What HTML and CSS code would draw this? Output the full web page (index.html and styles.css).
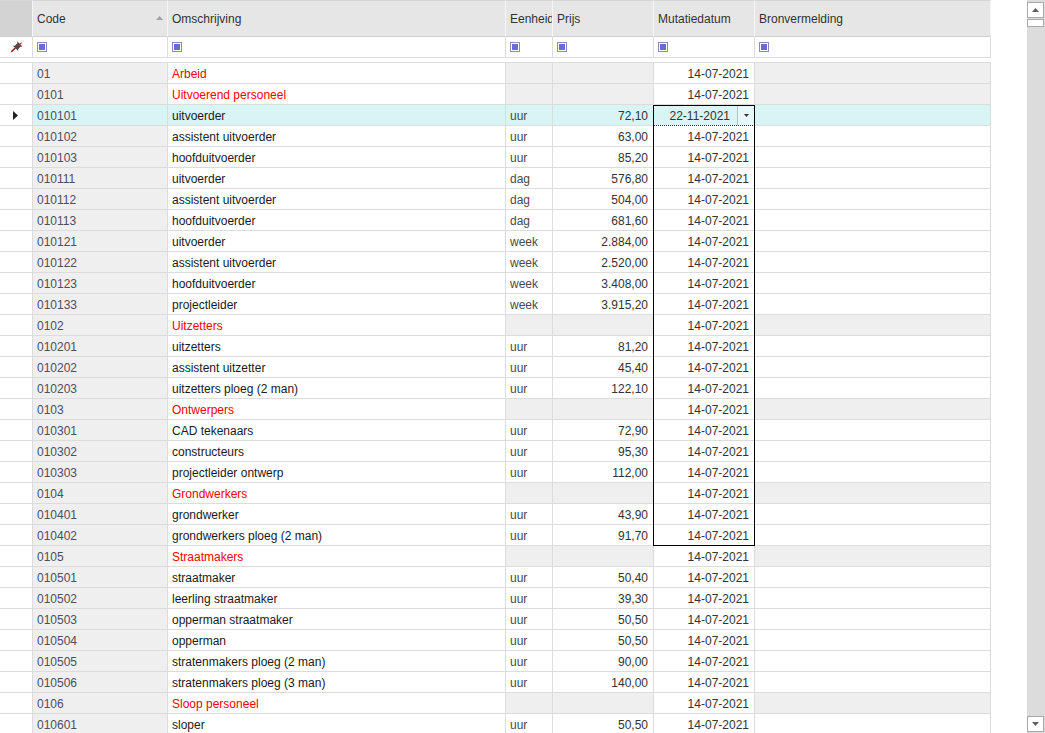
FILE: index.html
```html
<!DOCTYPE html>
<html>
<head>
<meta charset="utf-8">
<link rel="stylesheet" href="styles.css">
</head>
<body>
<div class="grid">
  <div class="row head">
    <div class="cell c-ind hind"></div>
    <div class="cell c-code hcell"><span>Code</span><svg class="sort" width="7" height="4" viewBox="0 0 7 4"><path d="M0 4 L3.5 0 L7 4 Z" fill="#a0a0a0"/></svg></div>
    <div class="cell c-oms hcell">Omschrijving</div>
    <div class="cell c-eh hcell">Eenheid</div>
    <div class="cell c-prijs hcell">Prijs</div>
    <div class="cell c-date hcell">Mutatiedatum</div>
    <div class="cell c-bron hcell">Bronvermelding</div>
  </div>
  <div class="row filter">
    <div class="cell c-ind fpin"><svg width="13" height="12" viewBox="0 0 13 12"><path d="M7.5 0.5 L12.5 5.5 L10.5 5.8 L8.2 8.1 L8.2 10 L2.9 4.7 L4.8 4.7 L7.2 2.4 Z" fill="#4a4a4a"/><path d="M5 7 L1.5 10.5" stroke="#4a4a4a" stroke-width="1.2"/><path d="M1.2 11.2 L11.6 1.6" stroke="#e0101c" stroke-width="1.1"/></svg></div>
    <div class="cell c-code"><svg class="fsq" width="10" height="10" viewBox="0 0 10 10"><rect x="0.5" y="0.5" width="9" height="9" fill="#fff" stroke="#8c8cb8"/><rect x="2" y="2" width="6" height="6" fill="#6a6ad8"/></svg></div>
    <div class="cell c-oms"><svg class="fsq" width="10" height="10" viewBox="0 0 10 10"><rect x="0.5" y="0.5" width="9" height="9" fill="#fff" stroke="#8c8cb8"/><rect x="2" y="2" width="6" height="6" fill="#6a6ad8"/></svg></div>
    <div class="cell c-eh"><svg class="fsq" width="10" height="10" viewBox="0 0 10 10"><rect x="0.5" y="0.5" width="9" height="9" fill="#fff" stroke="#8c8cb8"/><rect x="2" y="2" width="6" height="6" fill="#6a6ad8"/></svg></div>
    <div class="cell c-prijs"><svg class="fsq" width="10" height="10" viewBox="0 0 10 10"><rect x="0.5" y="0.5" width="9" height="9" fill="#fff" stroke="#8c8cb8"/><rect x="2" y="2" width="6" height="6" fill="#6a6ad8"/></svg></div>
    <div class="cell c-date"><svg class="fsq" width="10" height="10" viewBox="0 0 10 10"><rect x="0.5" y="0.5" width="9" height="9" fill="#fff" stroke="#8c8cb8"/><rect x="2" y="2" width="6" height="6" fill="#6a6ad8"/></svg></div>
    <div class="cell c-bron"><svg class="fsq" width="10" height="10" viewBox="0 0 10 10"><rect x="0.5" y="0.5" width="9" height="9" fill="#fff" stroke="#8c8cb8"/><rect x="2" y="2" width="6" height="6" fill="#6a6ad8"/></svg></div>
  </div>
  <div class="gap"></div>

  <div class="row group"><div class="cell c-ind"></div><div class="cell c-code">01</div><div class="cell c-oms">Arbeid</div><div class="cell c-eh"></div><div class="cell c-prijs"></div><div class="cell c-date">14-07-2021</div><div class="cell c-bron"></div></div>
  <div class="row group"><div class="cell c-ind"></div><div class="cell c-code">0101</div><div class="cell c-oms">Uitvoerend personeel</div><div class="cell c-eh"></div><div class="cell c-prijs"></div><div class="cell c-date">14-07-2021</div><div class="cell c-bron"></div></div>
  <div class="row sel"><div class="cell c-ind"><svg width="5" height="9" viewBox="0 0 5 9"><path d="M0 0 L5 4.5 L0 9 Z" fill="#222"/></svg></div><div class="cell c-code">010101</div><div class="cell c-oms">uitvoerder</div><div class="cell c-eh">uur</div><div class="cell c-prijs">72,10</div><div class="cell c-date editor"><span class="etext">22-11-2021</span><span class="ebtn"><svg width="5" height="3" viewBox="0 0 5 3"><path d="M0 0 L5 0 L2.5 3 Z" fill="#333"/></svg></span></div><div class="cell c-bron"></div></div>
  <div class="row"><div class="cell c-ind"></div><div class="cell c-code">010102</div><div class="cell c-oms">assistent uitvoerder</div><div class="cell c-eh">uur</div><div class="cell c-prijs">63,00</div><div class="cell c-date">14-07-2021</div><div class="cell c-bron"></div></div>
  <div class="row"><div class="cell c-ind"></div><div class="cell c-code">010103</div><div class="cell c-oms">hoofduitvoerder</div><div class="cell c-eh">uur</div><div class="cell c-prijs">85,20</div><div class="cell c-date">14-07-2021</div><div class="cell c-bron"></div></div>
  <div class="row"><div class="cell c-ind"></div><div class="cell c-code">010111</div><div class="cell c-oms">uitvoerder</div><div class="cell c-eh">dag</div><div class="cell c-prijs">576,80</div><div class="cell c-date">14-07-2021</div><div class="cell c-bron"></div></div>
  <div class="row"><div class="cell c-ind"></div><div class="cell c-code">010112</div><div class="cell c-oms">assistent uitvoerder</div><div class="cell c-eh">dag</div><div class="cell c-prijs">504,00</div><div class="cell c-date">14-07-2021</div><div class="cell c-bron"></div></div>
  <div class="row"><div class="cell c-ind"></div><div class="cell c-code">010113</div><div class="cell c-oms">hoofduitvoerder</div><div class="cell c-eh">dag</div><div class="cell c-prijs">681,60</div><div class="cell c-date">14-07-2021</div><div class="cell c-bron"></div></div>
  <div class="row"><div class="cell c-ind"></div><div class="cell c-code">010121</div><div class="cell c-oms">uitvoerder</div><div class="cell c-eh">week</div><div class="cell c-prijs">2.884,00</div><div class="cell c-date">14-07-2021</div><div class="cell c-bron"></div></div>
  <div class="row"><div class="cell c-ind"></div><div class="cell c-code">010122</div><div class="cell c-oms">assistent uitvoerder</div><div class="cell c-eh">week</div><div class="cell c-prijs">2.520,00</div><div class="cell c-date">14-07-2021</div><div class="cell c-bron"></div></div>
  <div class="row"><div class="cell c-ind"></div><div class="cell c-code">010123</div><div class="cell c-oms">hoofduitvoerder</div><div class="cell c-eh">week</div><div class="cell c-prijs">3.408,00</div><div class="cell c-date">14-07-2021</div><div class="cell c-bron"></div></div>
  <div class="row"><div class="cell c-ind"></div><div class="cell c-code">010133</div><div class="cell c-oms">projectleider</div><div class="cell c-eh">week</div><div class="cell c-prijs">3.915,20</div><div class="cell c-date">14-07-2021</div><div class="cell c-bron"></div></div>
  <div class="row group"><div class="cell c-ind"></div><div class="cell c-code">0102</div><div class="cell c-oms">Uitzetters</div><div class="cell c-eh"></div><div class="cell c-prijs"></div><div class="cell c-date">14-07-2021</div><div class="cell c-bron"></div></div>
  <div class="row"><div class="cell c-ind"></div><div class="cell c-code">010201</div><div class="cell c-oms">uitzetters</div><div class="cell c-eh">uur</div><div class="cell c-prijs">81,20</div><div class="cell c-date">14-07-2021</div><div class="cell c-bron"></div></div>
  <div class="row"><div class="cell c-ind"></div><div class="cell c-code">010202</div><div class="cell c-oms">assistent uitzetter</div><div class="cell c-eh">uur</div><div class="cell c-prijs">45,40</div><div class="cell c-date">14-07-2021</div><div class="cell c-bron"></div></div>
  <div class="row"><div class="cell c-ind"></div><div class="cell c-code">010203</div><div class="cell c-oms">uitzetters ploeg (2 man)</div><div class="cell c-eh">uur</div><div class="cell c-prijs">122,10</div><div class="cell c-date">14-07-2021</div><div class="cell c-bron"></div></div>
  <div class="row group"><div class="cell c-ind"></div><div class="cell c-code">0103</div><div class="cell c-oms">Ontwerpers</div><div class="cell c-eh"></div><div class="cell c-prijs"></div><div class="cell c-date">14-07-2021</div><div class="cell c-bron"></div></div>
  <div class="row"><div class="cell c-ind"></div><div class="cell c-code">010301</div><div class="cell c-oms">CAD tekenaars</div><div class="cell c-eh">uur</div><div class="cell c-prijs">72,90</div><div class="cell c-date">14-07-2021</div><div class="cell c-bron"></div></div>
  <div class="row"><div class="cell c-ind"></div><div class="cell c-code">010302</div><div class="cell c-oms">constructeurs</div><div class="cell c-eh">uur</div><div class="cell c-prijs">95,30</div><div class="cell c-date">14-07-2021</div><div class="cell c-bron"></div></div>
  <div class="row"><div class="cell c-ind"></div><div class="cell c-code">010303</div><div class="cell c-oms">projectleider ontwerp</div><div class="cell c-eh">uur</div><div class="cell c-prijs">112,00</div><div class="cell c-date">14-07-2021</div><div class="cell c-bron"></div></div>
  <div class="row group"><div class="cell c-ind"></div><div class="cell c-code">0104</div><div class="cell c-oms">Grondwerkers</div><div class="cell c-eh"></div><div class="cell c-prijs"></div><div class="cell c-date">14-07-2021</div><div class="cell c-bron"></div></div>
  <div class="row"><div class="cell c-ind"></div><div class="cell c-code">010401</div><div class="cell c-oms">grondwerker</div><div class="cell c-eh">uur</div><div class="cell c-prijs">43,90</div><div class="cell c-date">14-07-2021</div><div class="cell c-bron"></div></div>
  <div class="row"><div class="cell c-ind"></div><div class="cell c-code">010402</div><div class="cell c-oms">grondwerkers ploeg (2 man)</div><div class="cell c-eh">uur</div><div class="cell c-prijs">91,70</div><div class="cell c-date">14-07-2021</div><div class="cell c-bron"></div></div>
  <div class="row group"><div class="cell c-ind"></div><div class="cell c-code">0105</div><div class="cell c-oms">Straatmakers</div><div class="cell c-eh"></div><div class="cell c-prijs"></div><div class="cell c-date">14-07-2021</div><div class="cell c-bron"></div></div>
  <div class="row"><div class="cell c-ind"></div><div class="cell c-code">010501</div><div class="cell c-oms">straatmaker</div><div class="cell c-eh">uur</div><div class="cell c-prijs">50,40</div><div class="cell c-date">14-07-2021</div><div class="cell c-bron"></div></div>
  <div class="row"><div class="cell c-ind"></div><div class="cell c-code">010502</div><div class="cell c-oms">leerling straatmaker</div><div class="cell c-eh">uur</div><div class="cell c-prijs">39,30</div><div class="cell c-date">14-07-2021</div><div class="cell c-bron"></div></div>
  <div class="row"><div class="cell c-ind"></div><div class="cell c-code">010503</div><div class="cell c-oms">opperman straatmaker</div><div class="cell c-eh">uur</div><div class="cell c-prijs">50,50</div><div class="cell c-date">14-07-2021</div><div class="cell c-bron"></div></div>
  <div class="row"><div class="cell c-ind"></div><div class="cell c-code">010504</div><div class="cell c-oms">opperman</div><div class="cell c-eh">uur</div><div class="cell c-prijs">50,50</div><div class="cell c-date">14-07-2021</div><div class="cell c-bron"></div></div>
  <div class="row"><div class="cell c-ind"></div><div class="cell c-code">010505</div><div class="cell c-oms">stratenmakers ploeg (2 man)</div><div class="cell c-eh">uur</div><div class="cell c-prijs">90,00</div><div class="cell c-date">14-07-2021</div><div class="cell c-bron"></div></div>
  <div class="row"><div class="cell c-ind"></div><div class="cell c-code">010506</div><div class="cell c-oms">stratenmakers ploeg (3 man)</div><div class="cell c-eh">uur</div><div class="cell c-prijs">140,00</div><div class="cell c-date">14-07-2021</div><div class="cell c-bron"></div></div>
  <div class="row group"><div class="cell c-ind"></div><div class="cell c-code">0106</div><div class="cell c-oms">Sloop personeel</div><div class="cell c-eh"></div><div class="cell c-prijs"></div><div class="cell c-date">14-07-2021</div><div class="cell c-bron"></div></div>
  <div class="row"><div class="cell c-ind"></div><div class="cell c-code">010601</div><div class="cell c-oms">sloper</div><div class="cell c-eh">uur</div><div class="cell c-prijs">50,50</div><div class="cell c-date">14-07-2021</div><div class="cell c-bron"></div></div>

  <div class="selrect"></div>
</div>
<div class="spacer"></div>
<div class="vscroll">
  <div class="sbtn"><svg width="7" height="4" viewBox="0 0 7 4"><path d="M0 4 L3.5 0 L7 4 Z" fill="#606060"/></svg></div>
  <div class="thumb"></div>
  <div class="track"></div>
  <div class="sbtn"><svg width="7" height="4" viewBox="0 0 7 4"><path d="M0 0 L7 0 L3.5 4 Z" fill="#606060"/></svg></div>
</div>
</body>
</html>
```

FILE: styles.css
```css
html, body {
  margin: 0;
  padding: 0;
}
body {
  width: 1045px;
  height: 733px;
  overflow: hidden;
  display: flex;
  background: #fff;
  font-family: "Liberation Sans", Arial, sans-serif;
  font-size: 12px;
  color: #333;
}
.grid {
  position: relative;
  width: 991px;
  flex: none;
}
.row {
  display: flex;
  height: 21px;
}
.cell {
  box-sizing: border-box;
  flex: none;
  height: 100%;
  padding: 1px 4px 0;
  line-height: 20px;
  border-right: 1px solid #dcdcdc;
  border-bottom: 1px solid #dcdcdc;
  white-space: nowrap;
  overflow: hidden;
}
.c-ind { width: 33px; padding: 0; }
.c-code { width: 135px; background: #efefef; color: #4e4e5e; }
.c-oms { width: 338px; color: #1a1a1a; }
.c-eh { width: 47px; color: #4a4a4a; }
.c-prijs { width: 101px; text-align: right; padding-right: 5px; color: #333; }
.c-date { width: 101px; text-align: right; padding-right: 5px; color: #333; }
.c-bron { width: 236px; }

/* header */
.row.head { height: 37px; }
.head .cell {
  background: #e6e6e6;
  border-top: 1px solid #d6d6d6;
  border-right: 1px solid #f6f6f6;
  border-bottom: 1px solid #cfcfcf;
  padding-top: 1px;
  line-height: 35px;
  color: #333;
  text-align: left;
}
.head .hind { background: #d3d3d3; }
.head .c-code {
  display: flex;
  align-items: center;
  justify-content: space-between;
  padding-right: 4px;
}
.sort { margin-top: -2px; }

/* filter row */
.filter .cell {
  background: #fff;
  display: flex;
  align-items: center;
  text-align: left;
  padding-top: 0;
}
.filter .fpin { padding-left: 10px; }
.fsq { display: block; }
.gap {
  box-sizing: border-box;
  height: 5px;
  border-bottom: 1px solid #dcdcdc;
}

/* group rows */
.group .c-oms { color: #ff0000; }
.group .c-eh, .group .c-prijs, .group .c-bron { background: #efefef; }

/* selected row */
.sel .cell { background: #d9f4f4; }
.sel .c-ind {
  background: #fff;
  display: flex;
  align-items: center;
  padding-left: 13px;
}
.sel .c-ind svg { display: block; }
.editor {
  display: flex;
  padding: 0;
  border-bottom: 1px dotted #333;
}
.etext {
  flex: 1;
  text-align: right;
  padding: 1px 7px 0 0;
}
.ebtn {
  width: 16px;
  flex: none;
  border-left: 1px solid #b4c4c4;
  display: flex;
  align-items: center;
  justify-content: center;
  background: #e6f7f7;
}
.ebtn svg { display: block; }

.selrect {
  position: absolute;
  left: 653px;
  top: 105px;
  width: 102px;
  height: 441px;
  box-sizing: border-box;
  border: 1px solid #000;
  pointer-events: none;
}

.spacer {
  width: 36px;
  flex: none;
}
.vscroll {
  width: 18px;
  flex: none;
  height: 733px;
  box-sizing: border-box;
  padding: 2px 1px 1px 0;
  background: #dcdcdc;
  display: flex;
  flex-direction: column;
}
.sbtn {
  box-sizing: border-box;
  height: 16px;
  flex: none;
  background: #fff;
  border: 1px solid #a9a9a9;
  display: flex;
  align-items: center;
  justify-content: center;
}
.sbtn svg { display: block; }
.thumb {
  box-sizing: border-box;
  height: 8px;
  flex: none;
  margin-top: 1px;
  background: #fff;
  border: 1px solid #a9a9a9;
}
.track { flex: 1; }
```
